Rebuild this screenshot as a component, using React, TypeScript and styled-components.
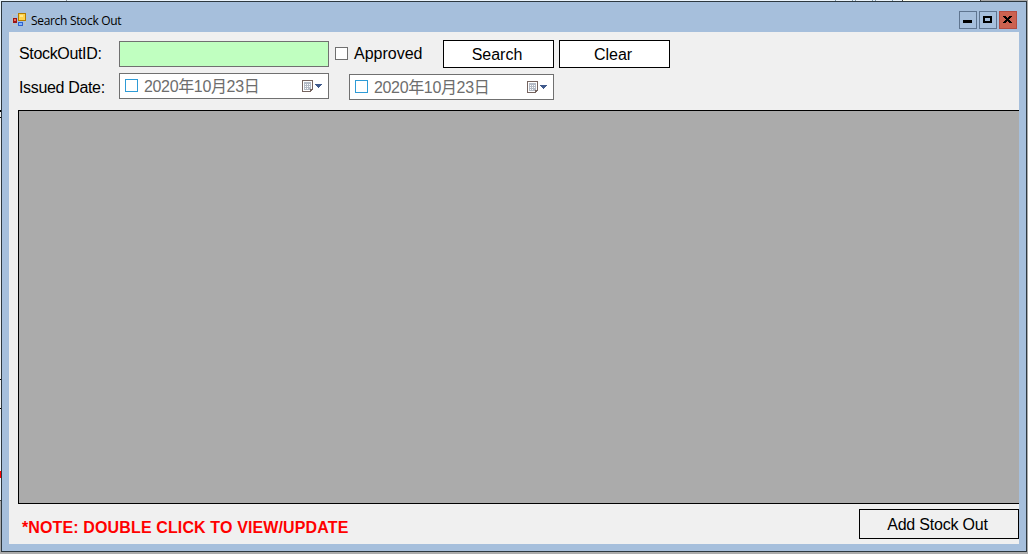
import React from 'react';
import styled, { createGlobalStyle } from 'styled-components';

const Global = createGlobalStyle`
  * { box-sizing: border-box; }
  html, body { margin: 0; padding: 0; }
  body { font-family: "Liberation Sans", "Noto Sans CJK JP", sans-serif; font-size: 16px; color: #000; overflow: hidden; }
`;

const Desktop = styled.div`
  width: 1028px;
  height: 554px;
  padding: 1px;
  background:
    linear-gradient(90deg, transparent 66px, #8c949a 66px 67px, transparent 67px 835px, #7d99ac 835px 836px, transparent 836px 852px, #7d99ac 852px 853px, transparent 853px 855px, #7d99ac 855px 856px, transparent 856px 872px, #7d99ac 872px 873px, transparent 873px 875px, #7d99ac 875px 876px, transparent 876px 892px, #7d99ac 892px 893px, transparent 893px 902px, #444 902px 903px, #fffff0 903px 960px, transparent 960px 980px, #444 980px 981px, #aaa 981px) 0 0 / 1028px 1px no-repeat,
    linear-gradient(#eaf3fb 110px, #000 110px 112px, #f0f0f0 112px 117px, #000 117px 118px, #f0f0f0 118px 379px, #000 379px 380px, #f0f0f0 380px 408px, #000 408px 409px, #f0f0f0 409px 418px, #eaf3fb 418px 471px, #f00 471px 478px, #eaf3fb 478px 500px, #444 500px 501px, #aaa 501px) 0 0 / 1px 554px no-repeat,
    linear-gradient(#eaf3fb, #eaf3fb) 0 0 / 980px 1px no-repeat,
    #ababab;
`;

const Window = styled.div`
  width: 1026px;
  height: 551px;
  border: 1px solid #2d3840;
  background: #a6bfdc;
  display: flex;
  flex-direction: column;
`;

const TitleBar = styled.header`
  height: 30px;
  flex: none;
  display: flex;
  padding: 9px 9px 0 10px;
`;

const Title = styled.div`
  flex: 1;
  margin-left: 5px;
  padding-top: 1px;
  font: 12px/18px "Open Sans", sans-serif;
  letter-spacing: -0.32px;
  white-space: nowrap;
`;

const Caption = styled.div`
  display: flex;
  gap: 2px;
`;

const CaptionButton = styled.button<{ $close?: boolean }>`
  width: 18px;
  height: 18px;
  padding: 0;
  border: 1px solid ${p => (p.$close ? '#b54b40' : '#5f7590')};
  background: ${p => (p.$close ? '#cc6250' : '#a6bfdc')};
  svg { display: block; }
`;

const Client = styled.main`
  flex: 1;
  margin: 0 7px 7px;
  background: #f0f0f0;
  display: flex;
  flex-direction: column;
`;

const Filters = styled.section`
  height: 78px;
  flex: none;
  padding: 8px 0 0 10px;
`;

const Row = styled.div<{ $gap?: number }>`
  display: flex;
  align-items: flex-start;
  margin-top: ${p => p.$gap ?? 0}px;
`;

const Label = styled.label<{ $top: number }>`
  width: 100px;
  padding-top: ${p => p.$top}px;
  line-height: 18px;
  letter-spacing: -0.34px;
  white-space: nowrap;
`;

const IdInput = styled.input`
  width: 210px;
  height: 26px;
  margin-top: 1px;
  border: 1px solid #707070;
  background: #c0ffc0;
  outline: 0;
`;

const Check = styled.span<{ $color: string }>`
  width: 13px;
  height: 13px;
  flex: none;
  border: 1px solid ${p => p.$color};
  background: #fff;
`;

const Approved = styled.div`
  display: flex;
  align-items: center;
  gap: 6px;
  width: 108px;
  margin-left: 6px;
  height: 27px;
  line-height: 18px;
`;

const Button = styled.button<{ $w: number; $h: number; $plain?: boolean }>`
  width: ${p => p.$w}px;
  height: ${p => p.$h}px;
  padding: 1px 3px 0 0;
  border: 1px solid #000;
  background: ${p => (p.$plain ? '#f0f0f0' : '#fff')};
  color: #000;
  font: inherit;
  letter-spacing: ${p => (p.$plain ? '-0.2px' : '0')};
`;

const Buttons = styled.div`
  display: flex;
  gap: 5px;
`;

const DateField = styled.div<{ $w: number; $top?: number }>`
  width: ${p => p.$w}px;
  height: 26px;
  margin-top: ${p => p.$top ?? 0}px;
  padding: 0 5px;
  border: 1px solid #707070;
  background: #fff;
  color: #6d6d6d;
  display: flex;
  align-items: flex-start;
`;

const DateCheck = styled(Check)`
  margin-top: 5px;
`;

const DateText = styled.span`
  flex: 1;
  margin-left: 6px;
  padding-top: 1px;
  line-height: 24px;
  letter-spacing: -0.35px;
  white-space: nowrap;
`;

const Grid = styled.section`
  height: 394px;
  flex: none;
  margin-left: 9px;
  border: 1px solid #000;
  border-right: 0;
  background: #ababab;
`;

const Footer = styled.footer`
  display: flex;
  justify-content: space-between;
  padding: 5px 0 0 13px;
`;

const Note = styled.strong`
  padding-top: 10px;
  line-height: 18px;
  letter-spacing: 0.13px;
  color: #f00;
`;

const AppIconSvg = styled.svg`
  flex: none;
  margin-top: 1px;
`;

const CalendarSvg = styled.svg`
  flex: none;
  margin-top: 6px;
`;

const AppIcon = () => (
  <AppIconSvg width="14" height="15" viewBox="0 0 14 15" shapeRendering="crispEdges">
    <path d="M0 2h6v1H0zM0 13h14v1H0zM0 2h1v12H0zM13 9h1v5h-1z" fill="#b9c3c9" />
    <rect x="6" y="1" width="8" height="8" fill="#b27c00" />
    <rect x="7" y="2" width="6" height="6" fill="#ffd34d" />
    <rect x="8" y="3" width="3" height="2" fill="#ffe98c" />
    <rect x="1" y="6" width="4" height="5" fill="#9d1512" />
    <rect x="2" y="7" width="2" height="2" fill="#ef6a60" />
    <rect x="6" y="10" width="5" height="4" fill="#2f62cf" />
    <rect x="7" y="11" width="3" height="2" fill="#84b4fa" />
  </AppIconSvg>
);

const CalendarIcon = () => (
  <CalendarSvg width="21" height="12" viewBox="0 0 21 12" shapeRendering="crispEdges">
    <path d="M0 0h11v10h-1v1H9v1H0z" fill="#75645f" />
    <path d="M1 1h9v8H8v2H1z" fill="#fff" />
    <path d="M2 2h7v7H8v1H2z" fill="#b4bbc6" />
    <path d="M3 4h1v1H3zM5 4h1v1H5zM7 4h1v1H7zM3 6h1v1H3zM5 6h1v1H5zM7 6h1v1H7zM3 8h1v1H3zM5 8h1v1H5z" fill="#fff" />
    <path d="M13 4h7v1h-1v1h-1v1h-1v1h-1V7h-1V6h-1V5h-1z" fill="#405a8c" />
  </CalendarSvg>
);

const DatePicker = ({ width, top }: { width: number; top?: number }) => (
  <DateField $w={width} $top={top}>
    <DateCheck $color="#2e9bd6" />
    <DateText>2020年10月23日</DateText>
    <CalendarIcon />
  </DateField>
);

const Spacer = styled.div`
  width: 20px;
`;

export default function App() {
  return (
    <>
      <Global />
      <Desktop>
        <Window>
          <TitleBar>
            <AppIcon />
            <Title>Search Stock Out</Title>
            <Caption>
              <CaptionButton aria-label="Minimize">
                <svg width="16" height="16"><path d="M3 8h9v3H3z" /></svg>
              </CaptionButton>
              <CaptionButton aria-label="Maximize">
                <svg width="16" height="16"><path fillRule="evenodd" d="M3 4h9v7H3zM5 6v3h5V6z" /></svg>
              </CaptionButton>
              <CaptionButton $close aria-label="Close">
                <svg width="16" height="16" shapeRendering="crispEdges">
                  <path d="M3 4h3v1h1v1h1V5h1V4h3v1h-1v1h-1v1H9v1h1v1h1v1h1v1H9v-1H8V9H7v1H6v1H3v-1h1V9h1V8h1V7H5V6H4V5H3z" />
                </svg>
              </CaptionButton>
            </Caption>
          </TitleBar>
          <Client>
            <Filters>
              <Row>
                <Label $top={5}>StockOutID:</Label>
                <IdInput aria-label="StockOutID" />
                <Approved>
                  <Check $color="#707070" />
                  <span>Approved</span>
                </Approved>
                <Buttons>
                  <Button $w={111} $h={28}>Search</Button>
                  <Button $w={111} $h={28}>Clear</Button>
                </Buttons>
              </Row>
              <Row $gap={5}>
                <Label $top={6}>Issued Date:</Label>
                <DatePicker width={210} />
                <Spacer />
                <DatePicker width={205} top={1} />
              </Row>
            </Filters>
            <Grid />
            <Footer>
              <Note>*NOTE: DOUBLE CLICK TO VIEW/UPDATE</Note>
              <Button $w={160} $h={30} $plain>Add Stock Out</Button>
            </Footer>
          </Client>
        </Window>
      </Desktop>
    </>
  );
}
